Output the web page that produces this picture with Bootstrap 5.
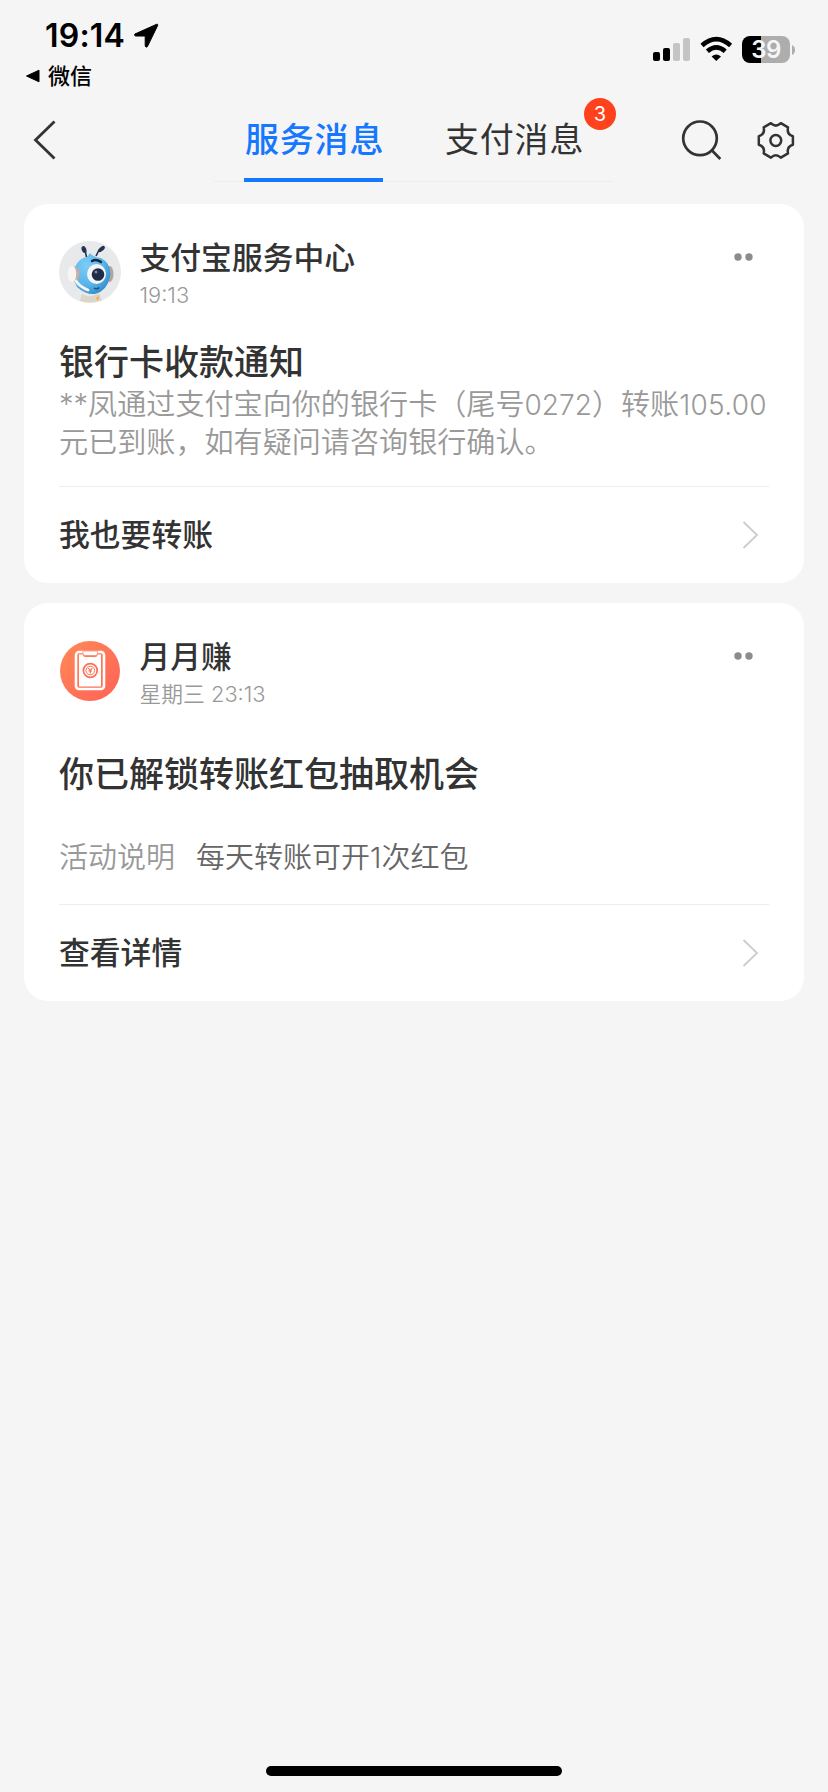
<!DOCTYPE html>
<html lang="zh-CN">
<head>
<meta charset="utf-8">
<meta name="viewport" content="width=device-width, initial-scale=1">
<title>服务消息</title>
<link href="https://cdn.jsdelivr.net/npm/bootstrap@5.3.0/dist/css/bootstrap.min.css" rel="stylesheet">
<style>
body{background:#f5f5f5;color:#333;font-family:Inter,"Noto Sans CJK SC",sans-serif;min-height:1792px}
svg{display:block;flex:none}
.status{height:92px;color:#000}
.clock{font-size:32px;font-weight:600;line-height:36px;letter-spacing:.2px;margin:18px 0 0 45px}
.back-app{font-size:22px;font-weight:500;line-height:28px;margin:8px 0 0 25px}
.signals{margin:36px 33px 0 0;gap:9px}
.battery{width:48px;height:27px;border-radius:8px;background:linear-gradient(90deg,#000 19px,#adadad 19px);color:#f5f5f5;font-size:24px;font-weight:600;line-height:27px;letter-spacing:-.5px}
.cap{margin-left:2px}
.topbar{height:112px}
.tabs{width:400px;height:90px;margin-left:157px;border-bottom:1px solid #ededed}
.tab-item{font-size:34px;letter-spacing:.8px;line-height:44px;padding-top:26px;height:90px;white-space:nowrap}
.tab-item.on{width:139px;margin-left:30px;color:#1677ff;font-weight:500;border-bottom:4px solid #1677ff;padding-left:1px}
.tab-item.off{margin-left:62px;position:relative}
.count{position:absolute;left:139px;top:6px;width:32px;height:32px;background:#ff411c;font-size:20px;line-height:32px;letter-spacing:0;color:#fff}
.msg{border:0;border-radius:24px;margin:0 24px 20px;padding:0 35px}
.msg-head{padding-top:36px;height:104px}
.avatar{width:62px;height:62px;margin:1px 18.5px 0 0}
.who{font-size:30.8px;font-weight:500;line-height:36px}
.when{font-size:21.8px;line-height:26px;color:#999;margin-top:6px;font-weight:350}
.more{margin:13px 16px 0 0}
.headline{font-size:35px;font-weight:500;line-height:40px;margin:34px 0 0}
.headline.spaced{margin-top:47px}
.detail{font-size:29.1px;font-weight:350;line-height:37px;color:#999;margin:4px 0 0;height:100px;white-space:nowrap}
.num{font-size:28px}
.num.amount{letter-spacing:.3px}
.facts{font-size:29px;font-weight:350;line-height:38px;color:#999;margin-top:45px;height:65px}
.facts dt,.facts dd{font-weight:350}
.facts dd{color:#666;margin:0 0 0 21px}
.foot{height:97px;border-top:1px solid #ededed;font-size:30.8px;font-weight:500}
.foot svg{margin-right:10px}
.home{width:296px;height:10px;background:#000;bottom:16px;left:266px}
</style>
</head>
<body class="position-relative">
<header>
  <div class="status d-flex justify-content-between">
    <div>
      <div class="clock d-flex align-items-center">19:14
        <svg class="ms-2" width="26" height="26" viewBox="0 0 26 26"><path d="M23.6 1.3 L1.8 11.1 Q1 12.6 2.6 13 H12.2 V23 Q13 25 14.4 23.6 L24.7 2.4 Q25 .8 23.6 1.3Z" fill="#000" stroke="#000" stroke-linejoin="round"/></svg>
      </div>
      <div class="back-app d-flex align-items-center">
        <svg width="15" height="14" viewBox="0 0 15 14"><path d="M1.5 7 L14 1.2 V12.8Z" stroke="#000" stroke-linejoin="round"/></svg><span class="ms-2">微信</span>
      </div>
    </div>
    <div class="signals d-flex align-items-start">
      <svg width="38" height="27" viewBox="0 0 38 27"><rect x="0" y="16" width="7" height="9" rx="2"/><rect x="10" y="12" width="7" height="13" rx="2"/><g fill="#c4c4c4"><rect x="20" y="7" width="7" height="18" rx="2"/><rect x="30" y="2" width="7" height="23" rx="2"/></g></svg>
      <svg width="33" height="27" viewBox="0 0 33 27"><g fill="none" stroke="#000" stroke-width="4.6"><path d="M2 9.4 Q16.3 -3.2 30.6 9.4"/><path d="M7.4 15.3 Q16.3 7.4 25.2 15.3"/></g><path d="M11.6 20.4 Q16.3 16.6 21 20.4 L16.3 25Z"/></svg>
      <div class="d-flex align-items-center"><div class="battery text-center">39</div><svg class="cap" width="3" height="10" viewBox="0 0 3 10"><path d="M0 0 Q3 1.5 3 5 T0 10Z" fill="#adadad"/></svg></div>
    </div>
  </div>
  <nav class="topbar d-flex">
    <svg style="margin:28px 0 0 33px" width="24" height="40" viewBox="0 0 24 40"><path d="M21.5 1.5 L2.5 20 L21.5 38.5" fill="none" stroke="#333" stroke-width="2.8"/></svg>
    <div class="tabs d-flex">
      <div class="tab-item on">服务消息</div>
      <div class="tab-item off">支付消息<span class="count rounded-circle text-center">3</span></div>
    </div>
    <svg style="margin:27px 0 0 67px" width="42" height="42" viewBox="0 0 42 42"><g fill="none" stroke="#333" stroke-width="2.7"><circle cx="19" cy="19.3" r="16.8"/><path d="M31 31.5 L39.3 40"/></g></svg>
    <svg style="margin:29px 0 0 34px" width="38" height="38" viewBox="0 0 38 38"><g fill="none" stroke="#333" stroke-width="2.5" stroke-linejoin="round"><circle cx="18.8" cy="19.5" r="5.4"/><path d="M13.9 2.2 Q18.8 7 23.8 2.2 L31 6.4 Q29.5 13.2 35.9 15.2 V23.7 Q29.5 25.6 31 32.4 L23.8 36.6 Q18.8 31.8 13.9 36.6 L6.7 32.4 Q8.2 25.6 1.8 23.7 V15.2 Q8.2 13.2 6.7 6.4Z"/></g></svg>
  </nav>
</header>
<main>
  <article class="card msg">
    <div class="msg-head d-flex">
      <svg class="avatar" viewBox="0 0 62 62">
        <defs>
          <clipPath id="face"><circle cx="31" cy="31" r="30.5"/></clipPath>
          <radialGradient id="skin" cx=".35" cy=".3" r=".8"><stop offset="0" stop-color="#7ccdf5"/><stop offset=".6" stop-color="#56b4ea"/><stop offset="1" stop-color="#2f86c4"/></radialGradient>
        </defs>
        <circle cx="31" cy="31" r="31" fill="#e8e9ea"/>
        <g clip-path="url(#face)">
          <path d="M20 62 L23 53 Q32 58 40 52 L44 62Z" fill="#ded5c9"/><path d="M37 57 L40 55 L39 60Z" fill="#e8ac42"/>
          <ellipse cx="50.5" cy="33" rx="4" ry="8" fill="#b3a39c"/>
          <path d="M31 12 Q34 16 42 17 Q53 23 51 36 Q48 50 36 53 Q27 54 18 46 Q12 36 16 26 Q20 17 28 16Z" fill="url(#skin)"/>
          <path d="M27.5 16 L26 9 M37 15 L40 9" stroke="#25344e" stroke-width="1.6"/>
          <ellipse cx="25" cy="8.5" rx="2.3" ry="3.5" transform="rotate(-20 25 8.5)" fill="#25344e"/><ellipse cx="42.5" cy="8" rx="2" ry="4" transform="rotate(50 42.5 8)" fill="#25344e"/>
          <path d="M33 20 Q37 17.5 42 21" stroke="#18263d" stroke-width="2.4" fill="none" stroke-linecap="round"/>
          <ellipse cx="37.5" cy="33" rx="9.5" ry="10" fill="#f3f5f6"/><circle cx="39" cy="33.5" r="6.3" fill="#202c47"/><circle cx="37" cy="31" r="1.5" fill="#7587a5"/>
          <path d="M35 47 Q38 49 40 46.5" stroke="#244b78" stroke-width="1.4" fill="none"/>
          <ellipse cx="16" cy="33" rx="4.5" ry="7.5" fill="#c9aba4"/><ellipse cx="13" cy="33" rx="4.3" ry="8" fill="#f7f5f3"/>
          <path d="M17 40 Q21 46 29 49" stroke="#f7f5f3" stroke-width="2.8" fill="none" stroke-linecap="round"/>
        </g>
      </svg>
      <div class="flex-grow-1"><div class="who">支付宝服务中心</div><div class="when">19:13</div></div>
      <svg class="more" width="19" height="8" viewBox="0 0 19 8"><g fill="#8c8c8c"><circle cx="4" cy="4" r="3.7"/><circle cx="15" cy="4" r="3.7"/></g></svg>
    </div>
    <h2 class="headline">银行卡收款通知</h2>
    <p class="detail">**凤通过支付宝向你的银行卡（尾号<span class="num">0272</span>）转账<span class="num amount">105.00</span><br>元已到账，如有疑问请咨询银行确认。</p>
    <div class="foot d-flex align-items-center justify-content-between">我也要转账
      <svg width="17" height="28" viewBox="0 0 17 28"><path d="M1.5 1 L15 14 L1.5 27" fill="none" stroke="#ccc" stroke-width="1.8"/></svg></div>
  </article>
  <article class="card msg">
    <div class="msg-head d-flex">
      <svg class="avatar" viewBox="0 0 62 62">
        <defs><linearGradient id="warm" x1="0" y1="0" x2="1" y2="1"><stop offset="0" stop-color="#ff8a57"/><stop offset="1" stop-color="#ff6156"/></linearGradient></defs>
        <circle cx="31" cy="31" r="30" fill="url(#warm)"/>
        <rect x="17" y="12" width="28" height="37" rx="3" fill="none" stroke="#fff" stroke-width="2.6"/>
        <path d="M20 14.5 H24 Q24 17 26.5 17 H36 Q38.5 17 38.5 14.5 H42 V46.5 H20Z" fill="#fff"/>
        <path d="M24 11 H38.5 V13.5 Q38.5 15.5 36.5 15.5 H26 Q24 15.5 24 13.5Z" fill="#fff" stroke="#ff8060" stroke-width=".7"/>
        <g fill="none" stroke="#ff7058"><circle cx="31.3" cy="30.5" r="6.9" stroke-width="1.8"/><circle cx="31.3" cy="30.5" r="4.3" stroke-width="1"/><path d="M29.3 28 L31.3 30.5 L33.3 28 M31.3 30.5 V33.5 M29.5 31 H33" stroke-width="1.2"/></g>
      </svg>
      <div class="flex-grow-1"><div class="who">月月赚</div><div class="when">星期三 23:13</div></div>
      <svg class="more" width="19" height="8" viewBox="0 0 19 8"><g fill="#8c8c8c"><circle cx="4" cy="4" r="3.7"/><circle cx="15" cy="4" r="3.7"/></g></svg>
    </div>
    <h2 class="headline spaced">你已解锁转账红包抽取机会</h2>
    <dl class="facts d-flex mb-0"><dt>活动说明</dt><dd>每天转账可开1次红包</dd></dl>
    <div class="foot d-flex align-items-center justify-content-between">查看详情
      <svg width="17" height="28" viewBox="0 0 17 28"><path d="M1.5 1 L15 14 L1.5 27" fill="none" stroke="#ccc" stroke-width="1.8"/></svg></div>
  </article>
</main>
<div class="home position-absolute rounded-pill"></div>
<script src="https://cdn.jsdelivr.net/npm/bootstrap@5.3.0/dist/js/bootstrap.bundle.min.js"></script>
</body>
</html>
